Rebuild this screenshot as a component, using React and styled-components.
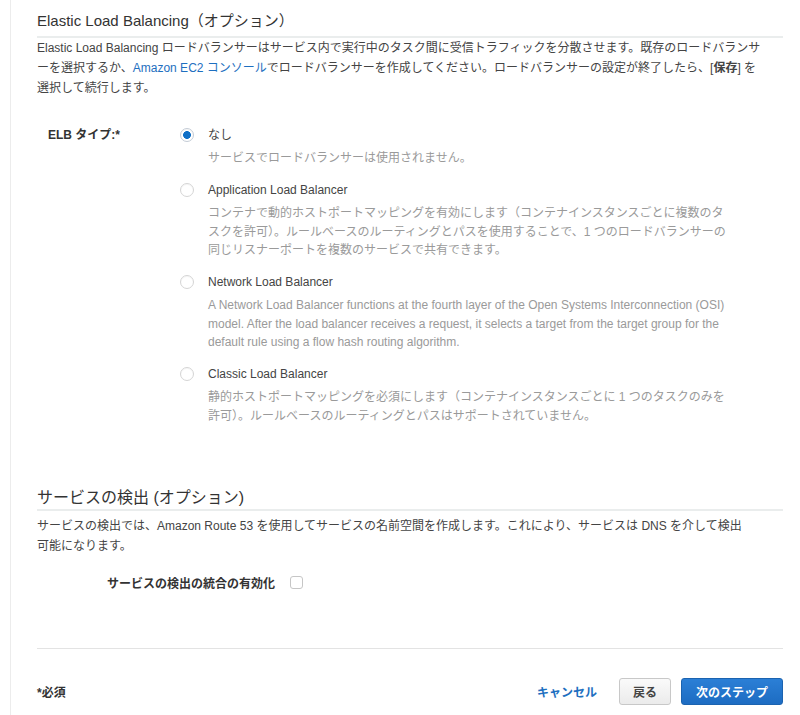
import styled, { createGlobalStyle } from 'styled-components'

const GlobalStyle = createGlobalStyle`
	html, body {
		margin: 0;
		padding: 0;
		background: #ffffff;
	}
	body {
		font-family: 'Liberation Sans', 'Noto Sans CJK JP', sans-serif;
		color: #444;
	}
`

const Page = styled.div`
	margin-left: 10px;
	border-left: 1px solid #ececec;
	min-height: 715px;
	box-sizing: border-box;
	padding: 0 17px 0 26px;
`

const SectionTitle = styled.h2`
	margin: ${props => props.first ? '0' : '63px 0 0'};
	padding: ${props => props.first ? '11px 0 5px' : '0 0 1px'};
	font-size: ${props => props.size || 15}px;
	font-weight: 400;
	line-height: 20px;
	color: #333;
	border-bottom: 2px solid #eaeded;
`

const Intro = styled.p`
	margin: ${props => props.gap || 0}px 0 0;
	font-size: 12px;
	line-height: 20px;
	color: #444;
	max-width: ${props => props.maxWidth}px;
`

const Link = styled.a`
	color: #1e6fc0;
	text-decoration: none;
`

const FormRow = styled.div`
	display: flex;
	margin-top: 28px;
`

const FieldLabel = styled.div`
	width: 132px;
	padding-left: 11px;
	font-size: 12px;
	font-weight: 700;
	line-height: 18px;
	color: #333;
`

const Options = styled.div`
	display: flex;
	flex-direction: column;
	gap: 13.5px;
`

const Option = styled.label`
	display: grid;
	grid-template-columns: 28px 522px;
	align-items: start;
`

const Radio = styled.span`
	width: 14px;
	height: 14px;
	margin-top: 2px;
	box-sizing: border-box;
	border-radius: 50%;
	border: 1px solid ${props => props.checked ? '#c4ccd6' : '#d5d5d5'};
	background: ${props => props.checked
		? 'radial-gradient(circle, #0f6fc6 0, #0f6fc6 3.6px, #ffffff 4.2px)'
		: '#ffffff'};
	box-shadow: inset 0 1px 1px rgba(0, 0, 0, 0.04);
`

const OptionText = styled.div`
	display: flex;
	flex-direction: column;
	gap: 5px;
`

const OptionTitle = styled.span`
	font-size: 12px;
	line-height: 18px;
	color: #444;
`

const OptionDesc = styled.span`
	font-size: 12px;
	line-height: 18.5px;
	color: #9a9a9a;
`

const CheckRow = styled.div`
	display: flex;
	align-items: center;
	margin-top: 16px;
	height: 20px;
`

const CheckLabel = styled.span`
	width: 238px;
	text-align: right;
	margin-right: 15px;
	font-size: 12px;
	font-weight: 700;
	color: #333;
`

const CheckBox = styled.span`
	width: 13px;
	height: 13px;
	box-sizing: border-box;
	border: 1px solid #c6c6c6;
	border-radius: 3px;
	background: #fff;
`

const Footer = styled.div`
	margin-top: 56px;
	border-top: 1px solid #e3e3e3;
	padding-top: 29px;
	display: flex;
	justify-content: space-between;
	align-items: center;
`

const Required = styled.span`
	font-size: 12px;
	font-weight: 700;
	color: #333;
`

const Actions = styled.div`
	display: flex;
	align-items: center;
`

const CancelLink = styled.a`
	font-size: 12px;
	font-weight: 700;
	color: #1e6fc0;
	margin-right: 22px;
	text-decoration: none;
`

const Button = styled.button`
	height: 27px;
	padding: 0 ${props => props.primary ? 14 : 13}px;
	margin-left: ${props => props.primary ? 10 : 0}px;
	border-radius: 3px;
	font-family: inherit;
	font-size: 12px;
	font-weight: 700;
	cursor: pointer;
	color: ${props => props.primary ? '#ffffff' : '#444'};
	border: 1px solid ${props => props.primary ? '#1b63b0' : '#c8c8c8'};
	background: ${props => props.primary
		? 'linear-gradient(#2b7fd6, #1d6cc2)'
		: 'linear-gradient(#fafafa, #ebebeb)'};
`

const elbOptions = [
	{
		title: 'なし',
		desc: 'サービスでロードバランサーは使用されません。',
		checked: true
	},
	{
		title: 'Application Load Balancer',
		desc: 'コンテナで動的ホストポートマッピングを有効にします（コンテナインスタンスごとに複数のタスクを許可）。ルールベースのルーティングとパスを使用することで、1 つのロードバランサーの同じリスナーポートを複数のサービスで共有できます。'
	},
	{
		title: 'Network Load Balancer',
		desc: 'A Network Load Balancer functions at the fourth layer of the Open Systems Interconnection (OSI) model. After the load balancer receives a request, it selects a target from the target group for the default rule using a flow hash routing algorithm.'
	},
	{
		title: 'Classic Load Balancer',
		desc: '静的ホストポートマッピングを必須にします（コンテナインスタンスごとに 1 つのタスクのみを許可）。ルールベースのルーティングとパスはサポートされていません。'
	}
]

const App = () => {
	return (
		<>
			<GlobalStyle />
			<Page>
				<SectionTitle first>Elastic Load Balancing（オプション）</SectionTitle>
				<Intro maxWidth={730}>
					Elastic Load Balancing ロードバランサーはサービス内で実行中のタスク間に受信トラフィックを分散させます。既存のロードバランサーを選択するか、<Link href="#">Amazon EC2 コンソール</Link>でロードバランサーを作成してください。ロードバランサーの設定が終了したら、[<b>保存</b>] を選択して続行します。
				</Intro>

				<FormRow>
					<FieldLabel>ELB タイプ:*</FieldLabel>
					<Options>
						{elbOptions.map((opt, key) => (
							<Option key={key}>
								<Radio checked={opt.checked} />
								<OptionText>
									<OptionTitle>{opt.title}</OptionTitle>
									<OptionDesc>{opt.desc}</OptionDesc>
								</OptionText>
							</Option>
						))}
					</Options>
				</FormRow>

				<SectionTitle size={16}>サービスの検出 (オプション)</SectionTitle>
				<Intro gap={5} maxWidth={714}>
					サービスの検出では、Amazon Route 53 を使用してサービスの名前空間を作成します。これにより、サービスは DNS を介して検出可能になります。
				</Intro>

				<CheckRow>
					<CheckLabel>サービスの検出の統合の有効化</CheckLabel>
					<CheckBox />
				</CheckRow>

				<Footer>
					<Required>*必須</Required>
					<Actions>
						<CancelLink href="#">キャンセル</CancelLink>
						<Button>戻る</Button>
						<Button primary>次のステップ</Button>
					</Actions>
				</Footer>
			</Page>
		</>
	)
}

export default App
